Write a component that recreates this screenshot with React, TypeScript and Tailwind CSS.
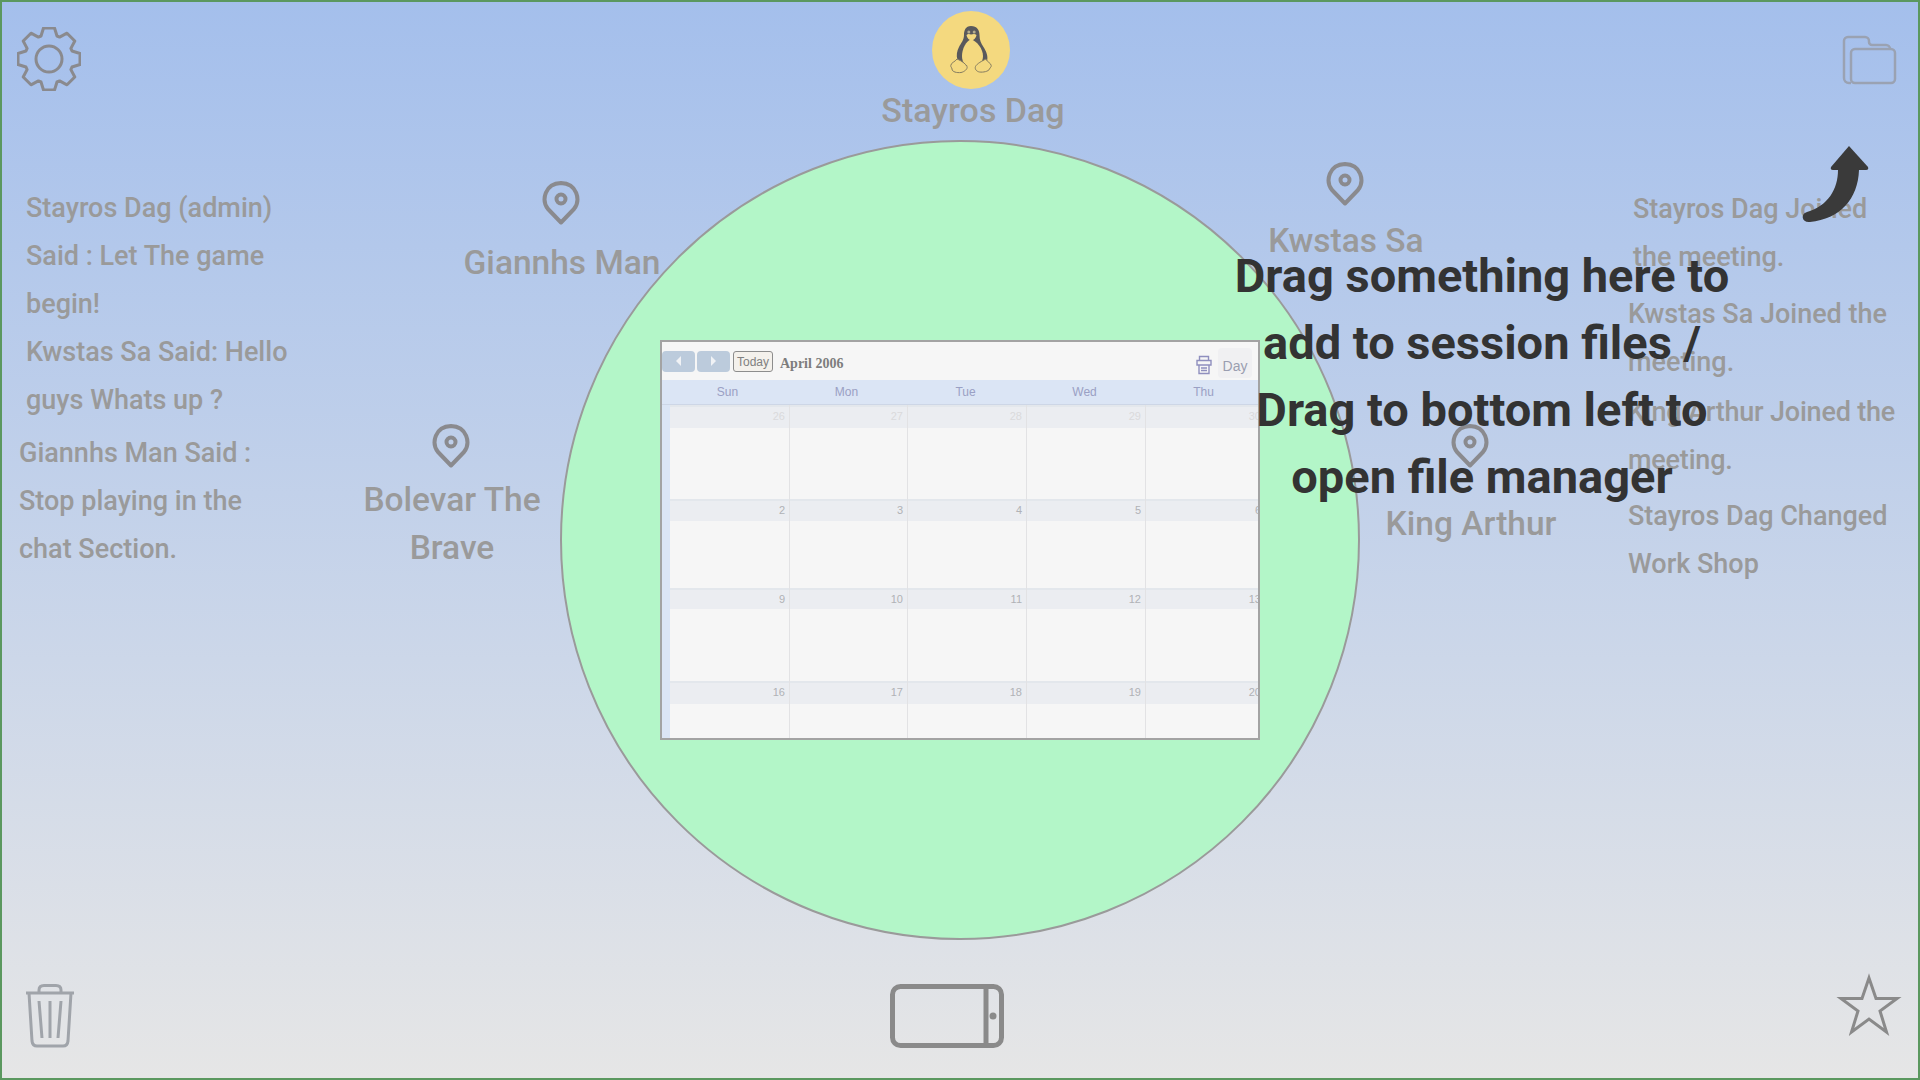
import React from 'react';

const gearPath = () => {
  const pts: string[] = [];
  for (let i = 0; i < 8; i++) {
    const a = (i * Math.PI) / 4 - Math.PI / 2;
    const p = (r: number, w: number) => {
      const x = 32 + r * Math.cos(a) - w * Math.sin(a);
      const y = 32 + r * Math.sin(a) + w * Math.cos(a);
      return `${x.toFixed(1)} ${y.toFixed(1)}`;
    };
    pts.push(p(23, -8), p(31, -5.5), p(31, 5.5), p(23, 8));
  }
  return `M${pts.join(' L')} Z`;
};

function Pin() {
  return (
    <svg className="shrink-0 mr-[2px]" viewBox="0 0 38 44" width="38" height="44" fill="none" stroke="#8a8a8e" strokeWidth="4">
      <path d="M19 41.5 L6 28 C-1 19 3 2.5 19 2 C35 2.5 39 19 32 28 Z" strokeLinejoin="round" />
      <circle cx="19" cy="18" r="4.5" />
    </svg>
  );
}

function Penguin() {
  return (
    <svg viewBox="0 0 42 48" width="42" height="48">
      {/* body and wings */}
      <path d="M21 0 C15.5 0 14 4.5 14 9 C14 14 11 17 9 21 C7 25 6 29 7.5 34 L12 40 L31 40 L37 35 C38.5 30 36 25 33.5 21 C31 17 29.5 14 29.5 9 C29.5 4 27 0 21 0 Z" fill="#59595c" />
      {/* belly */}
      <path d="M21 13.5 C16 15 12 23 12 30 C12 37 16 41 22 41 C28 41 33 37 33 30 C33 23 27 15 21 13.5 Z" fill="#f4d97f" />
      {/* face */}
      <path d="M16.5 9 C18 7.5 19.5 8 21 8.5 C23 8 25 7.5 26.5 9 C26 12 23.5 14.5 21.5 14.5 C19.5 14.5 17 12 16.5 9 Z" fill="#f4d97f" />
      <circle cx="18.8" cy="6" r="1.5" fill="#b5ad8c" />
      <circle cx="24.2" cy="6" r="1.5" fill="#b5ad8c" />
      {/* feet */}
      <path d="M7 33 C5 36 1 36.5 0.8 39.5 C0.5 41 2 41.5 2 43 C2 46 7 47 11 46.5 C14 46 18 43 17 40.5 C15.5 37.5 11 34.5 7 33 Z" fill="#f4d97f" stroke="#857c60" strokeWidth="1" />
      <path d="M36 33 C37 36 41 37 41.2 39.5 C41.5 41 40 41.5 39.5 43 C38.5 45.5 33 46.5 29.5 46 C26.5 45.5 24.5 43 25.5 40.5 C27 37.5 32 35 36 33 Z" fill="#f4d97f" stroke="#857c60" strokeWidth="1" />
    </svg>
  );
}

const days = ['Sun', 'Mon', 'Tue', 'Wed', 'Thu'];
const weeks = [
  { dates: [26, 27, 28, 29, 30], muted: true, row: 'h-[94px]', band: 'h-[23px]' },
  { dates: [2, 3, 4, 5, 6], muted: false, row: 'h-[89px]', band: 'h-[22px]' },
  { dates: [9, 10, 11, 12, 13], muted: false, row: 'h-[93px]', band: 'h-[21px]' },
  { dates: [16, 17, 18, 19, 20], muted: false, row: 'h-[57px]', band: 'h-[23px]' },
];

function Calendar() {
  return (
    <div className="w-[600px] h-[400px] shrink-0 border-2 border-[#a3a3a3] bg-[#f6f6f6] overflow-hidden font-['Liberation_Sans',sans-serif]">
      {/* toolbar */}
      <div className="h-[38px] flex items-center relative">
        <div className="w-[33px] h-[21px] bg-[#bccbdc] rounded-sm flex items-center justify-center">
          <div className="w-0 h-0 border-y-[5px] border-y-transparent border-r-[5px] border-r-[#f0f2f5]" />
        </div>
        <div className="w-[33px] h-[21px] bg-[#bccbdc] rounded-sm flex items-center justify-center ml-[2px]">
          <div className="w-0 h-0 border-y-[5px] border-y-transparent border-l-[5px] border-l-[#f0f2f5]" />
        </div>
        <div className="ml-[3px] w-[40px] h-[21px] border border-[#8d8d8d] rounded-[3px] bg-[#f4f1ec] text-[12px] text-[#808080] font-light text-center leading-[20px]">Today</div>
        <div className="ml-[7px] mt-[4px] text-[14px] font-bold text-[#7d7d7d] font-['Liberation_Serif',serif]">April 2006</div>
        <svg className="absolute left-[534px] top-[13px]" width="16" height="20" viewBox="0 0 16 20" fill="none" stroke="#8f8fbe" strokeWidth="1.4">
          <path d="M3.5 5 V1.5 H12.5 V5 M1 5.5 H15 V10 H1 Z M3 10 H13 V18.5 H3 Z M5 13 H11 M5 15.5 H11" />
        </svg>
        <div className="absolute left-[556px] top-[6px] w-[34px] h-[30px] bg-[#f0f0f2] rounded-sm text-[14px] text-[#9a9eb0] font-light text-center leading-[36px]">Day</div>
      </div>
      {/* day names */}
      <div className="h-[25px] pl-[6px] bg-[#dbe5f5] border-b border-[#cdd6e6] grid grid-cols-[repeat(5,119px)] text-[12px] text-[#9aa0c4] leading-[25px] text-center">
        {days.map(d => (
          <div key={d}>{d}</div>
        ))}
      </div>
      {/* month grid */}
      <div className="flex">
        <div className="w-[8px] bg-[#dbe5f5] shrink-0" />
        <div className="flex-1 min-w-0">
          {weeks.map((week, i) => (
            <div key={i} className={`relative grid grid-cols-[120px_118px_119px_119px_120px] ${week.row}`}>
              <div className={`absolute inset-x-0 top-0 ${week.band} bg-[#ebedf1] border-t-2 border-[#e3e7ec]`} />
              {week.dates.map(date => (
                <div key={date} className="relative border-r border-[#e2e2e4] pr-[4px] text-right text-[11px] leading-[22px] font-light">
                  <span className={week.muted ? 'text-[#dadadc]' : 'text-[#b0b2b6]'}>{date}</span>
                </div>
              ))}
            </div>
          ))}
        </div>
      </div>
    </div>
  );
}

function Participant({ className, gap, lines }: { className: string; gap: string; lines: string[] }) {
  return (
    <div className={`absolute w-[400px] flex flex-col items-center ${gap} ${className}`}>
      <Pin />
      <div className="text-center text-[33.5px] leading-[48px] font-medium text-[#9a9a9a]">
        {lines.map(l => (
          <div key={l}>{l}</div>
        ))}
      </div>
    </div>
  );
}

function ChatBlock({ lines, className }: { lines: string[]; className: string }) {
  return (
    <div className={`text-[27px] leading-[48px] font-medium text-[#9a9a9a] whitespace-nowrap ${className}`}>
      {lines.map(l => (
        <div key={l}>{l}</div>
      ))}
    </div>
  );
}

export default function App() {
  return (
    <div className="relative w-[1920px] h-[1080px] overflow-hidden flex flex-col bg-gradient-to-b from-[#a4bfec] to-[#e6e6e6] font-[Roboto,sans-serif]">
      {/* top bar */}
      <header className="h-[140px] shrink-0 flex items-start">
        <div className="w-[773px] pl-[17px] pt-[27px]">
          <svg width="64" height="64" viewBox="0 0 64 64" fill="none" stroke="#8a8a8e" strokeWidth="3" strokeLinejoin="round">
            <path d={gearPath()} />
            <circle cx="32" cy="32" r="13" />
          </svg>
        </div>
        <div className="w-[400px] flex flex-col items-center pt-[11px]">
          <div className="w-[78px] h-[78px] mr-[4px] rounded-full bg-[#f4d97f] flex items-center justify-center">
            <Penguin />
          </div>
          <div className="-mt-[3px] text-[34px] leading-[48px] font-medium text-[#9a9a9a]">Stayros Dag</div>
        </div>
        <div className="flex-1 flex justify-end pr-[23px] pt-[35px]">
          <svg width="55" height="50" viewBox="0 0 55 50" fill="none" stroke="#9aa2b2" strokeWidth="2.5">
            <path d="M9 48 H7 A5 5 0 0 1 2 43 V6 A4 4 0 0 1 6 2 H23 A4 4 0 0 1 27 6 V7 A3 3 0 0 0 30 10 H44 A4 4 0 0 1 48 14" />
            <rect x="9" y="14" width="44" height="34" rx="4" />
          </svg>
        </div>
      </header>

      <main className="h-[800px] shrink-0 flex">
        {/* chat */}
        <aside className="w-[560px] shrink-0 pt-[44px]">
          <ChatBlock className="pl-[26px]" lines={['Stayros Dag (admin)', 'Said : Let The game', 'begin!', 'Kwstas Sa Said: Hello', 'guys Whats up ?']} />
          <ChatBlock className="pl-[19px] mt-[5px]" lines={['Giannhs Man Said :', 'Stop playing in the', 'chat Section.']} />
        </aside>

        {/* shared circle and calendar */}
        <section className="w-[800px] h-[800px] shrink-0 rounded-full bg-[#b3f6c8] border-2 border-[#9a9a9a] flex items-center justify-center">
          <Calendar />
        </section>

        {/* activity log */}
        <aside className="flex-1 pt-[45px] pl-[268px]">
          <ChatBlock className="pl-[5px]" lines={['Stayros Dag Joined', 'the meeting.']} />
          <ChatBlock className="mt-[9px]" lines={['Kwstas Sa Joined the', 'meeting.']} />
          <ChatBlock className="mt-[2px] tracking-[-0.2px]" lines={['King Arthur Joined the', 'meeting.']} />
          <ChatBlock className="mt-[8px]" lines={['Stayros Dag Changed', 'Work Shop']} />
        </aside>
      </main>

      {/* bottom bar */}
      <footer className="flex-1 flex items-start justify-between pt-[44px] pl-[25px] pr-[18px]">
        <svg width="50" height="64" viewBox="0 0 50 64" fill="none" stroke="#a0a4aa" strokeWidth="3">
          <path d="M1 9 H49 M4 9 L7 57 Q7.5 62 12 62 H38 Q42.5 62 43 57 L46 9 M14 9 V6 Q14 1.5 19 1.5 H31 Q36 1.5 36 6 V9 M14 17 L17 54 M25 17 V54 M36 17 L33 54" />
        </svg>
        <svg className="mr-[17px]" width="114" height="64" viewBox="0 0 114 64" fill="none" stroke="#8a8a8a" strokeWidth="5">
          <rect x="2.5" y="2.5" width="109" height="59" rx="8" />
          <path d="M96 3 V61" />
          <circle cx="103" cy="32" r="3.5" fill="#8a8a8a" stroke="none" />
        </svg>
        <svg className="-mt-[12px]" width="66" height="66" viewBox="0 0 66 66" fill="none" stroke="#8a8a8a" strokeWidth="3">
          <path d="M33 6 L40 26.5 L61 26.5 L44 39 L50.500 60 L33 47 L15.500 60 L22 39 L5 26.500 L26 26.500 Z" />
        </svg>
      </footer>

      {/* participants around the table */}
      <Participant className="left-[362px] top-[181px]" gap="gap-[14px]" lines={['Giannhs Man']} />
      <Participant className="left-[252px] top-[424px]" gap="gap-[8px]" lines={['Bolevar The', 'Brave']} />
      <Participant className="left-[1146px] top-[162px]" gap="gap-[11px]" lines={['Kwstas Sa']} />
      <Participant className="left-[1271px] top-[424px]" gap="gap-[32px]" lines={['King Arthur']} />

      {/* drag hint */}
      <svg className="absolute left-[1800px] top-[144px]" width="72" height="82" viewBox="0 0 72 82" fill="#3a3a3a">
        <path d="M38 26 C38 45 28 62 7 68 C0 70 2 79 10 78 C40 75 58 55 59 26 Z" />
        <path d="M49 2 L31 23 Q30 26 33 26 L66 26 Q69 26 68 23 Z" />
      </svg>
      <div className="absolute left-[1182px] top-[242px] w-[600px] text-center text-[47px] leading-[67px] font-bold text-[#333333]">
        Drag something here to<br />add to session files /<br />Drag to bottom left to<br />open file manager
      </div>

      {/* window frame */}
      <div className="absolute inset-0 border-2 border-[#5b985f] pointer-events-none" />
    </div>
  );
}
